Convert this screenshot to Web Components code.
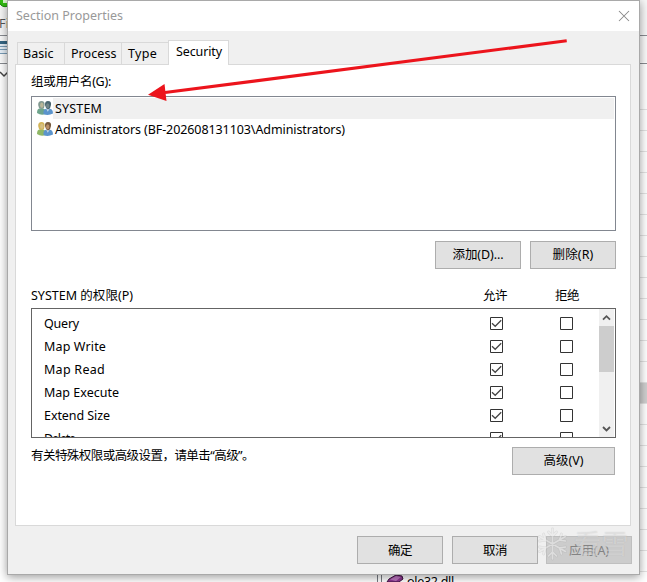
<!DOCTYPE html>
<html lang="zh-CN"><head><meta charset="utf-8"><title>Section Properties</title>
<style>html,body{margin:0;width:647px;height:582px;overflow:hidden;background:#fff}body{font:12.5px/16px "Noto Sans","Noto Sans CJK SC",sans-serif;color:#000}</style></head>
<body><desktop-scene></desktop-scene>
<script>
const define=(name,html,init)=>customElements.define(name,class extends HTMLElement{
  connectedCallback(){
    if(this.shadowRoot)return;
    const t=document.createElement('template');
    t.innerHTML=typeof html==='function'?html(this):html;
    this.attachShadow({mode:'open'}).append(t.content.cloneNode(true));
    if(init)init(this);
  }
});
// Text label whose letter spacing is adjusted to occupy a given width.
define('ui-label','<style>:host{display:block;white-space:pre;line-height:16px;flex:none}span{display:inline-block}</style><span><slot></slot></span>',el=>{
  const w=+el.getAttribute('w'),s=el.shadowRoot.querySelector('span');
  if(!w)return;
  s.style.letterSpacing=(w-s.getBoundingClientRect().width)/[...el.textContent].length+'px';
  el.style.width=w+'px';
});
define('ui-tab','<style>:host{display:flex;box-sizing:border-box;height:22px;border:1px solid #d9d9d9;border-bottom:0;border-left-width:0;padding:3px 0 0 6px;background:#f0f0f0;flex:none}:host([first]){border-left-width:1px;padding-left:5px}:host([active]){height:25px;border-left-width:1px;background:#fff;padding:3px 0 0 7px;margin:0 0 -1px -1px}</style><slot></slot>');
define('ui-button','<style>:host{display:flex;box-sizing:border-box;width:86px;height:28px;border:1px solid #adadad;background:#e1e1e1;align-items:center;justify-content:center;flex:none}:host([wide]){width:103px}:host([disabled]){background:#ccc;border-color:#bfbfbf;color:#838383}</style><slot></slot>');
define('user-icon',el=>{
  const a=el.hasAttribute('gold')?['#d3b458','#8fb765','#765a3e']:['#829991','#6da48c','#4a6670'];
  return `<style>:host{display:block;width:16px;height:16px;flex:none}svg{display:block}</style><svg width="16" height="16" viewBox="0 0 16 16">
  <path d="M0 13Q0 8.5 3 8.2h3Q9 9 9 14Q4 16 0 13Z" fill="${a[1]}"/>
  <path d="M1.2 5Q1 1 4.5 1Q8 1 7.6 5L7 8 4.5 9 2 8Z" fill="${a[0]}"/><ellipse cx="4.8" cy="5.2" rx="1.7" ry="2.6" fill="#d7c69c" opacity=".65"/>
  <path d="M6.5 14Q6 9 9 8.8h3.5Q16 9 16 13.5Q11 16 6.5 14Z" fill="#5b94cc"/>
  <path d="m9.2 8.7 1.6 3 1.7-3Z" fill="#c4d9e9"/><path d="M8 5Q7.7 1.2 11 1Q14.6 1.2 14 5L13 8.2 11 9.5 9 8Z" fill="${a[2]}"/>
  <ellipse cx="10.7" cy="5.8" rx="1.7" ry="2.5" fill="${el.hasAttribute('gold')?'#b98e67':'#718487'}"/></svg>`});
define('user-row','<style>:host{display:flex;height:21px;padding-left:4px}div{flex:1;padding:3px 0 0 2px;margin-right:1px;box-sizing:border-box}:host([selected]) div{background:#f0f0f0}</style><slot name="icon"></slot><div><slot></slot></div>');
define('user-list','<style>:host{display:block;box-sizing:border-box;height:135px;border:1px solid #828790;padding:1px 0 0 1px}</style><slot></slot>');
define('check-box',el=>`<style>:host{display:block;width:13px;height:13px;flex:none}svg{display:block}</style><svg width="13" height="13"><path d="M.5.5h12v12H.5Z" fill="#fff" stroke="#333"/>${el.hasAttribute('checked')?'<path d="m2 6.2 3.2 3.1 6-6.1" fill="none" stroke="#444" stroke-width="1.25"/>':''}</svg>`);
define('perm-row','<style>:host{display:grid;grid-template-columns:446px 70px 13px;height:23px;align-items:center;padding-left:12px}</style><slot></slot><check-box checked></check-box><check-box></check-box>');
define('scroll-bar','<style>:host{display:flex;flex-direction:column;width:15px;background:#f0f0f0;margin-right:1px;flex:none}.t{height:46px;background:#cdcdcd}.g{flex:1}svg{display:block}</style><svg width="15" height="17"><path d="m4 10.7 3.5-3.5 3.5 3.5" fill="none" stroke="#555" stroke-width="1.8"/></svg><div class="t"></div><div class="g"></div><svg width="15" height="17"><path d="m4 7 3.5 3.5L11 7" fill="none" stroke="#555" stroke-width="1.8"/></svg>');
define('perm-list','<style>:host{display:flex;box-sizing:border-box;height:130px;border:1px solid #646464;overflow:hidden}.r{flex:1;padding-top:3px;height:125px;overflow:hidden}</style><div class="r"><slot></slot></div><scroll-bar></scroll-bar>');
define('title-bar','<style>:host{display:flex;height:30px;background:#fff;color:#999;justify-content:space-between;padding:0 9px 0 8px;align-items:center}svg{display:block}</style><slot></slot><svg width="12" height="12"><path d="m1 1 10 10M11 1 1 11" stroke="#888" stroke-width="1.05"/></svg>');
define('app-backdrop',()=>{
  let lines='';for(let y=109;y<582;y+=21)lines+=`<path d="M640 ${y}.5h7" stroke="#e3e3e3"/>`;
  return `<style>:host{display:block;position:absolute;inset:0}svg{position:absolute;inset:0}.m{position:absolute;left:-1px;top:16px;color:#555;width:9px;overflow:hidden}.f{position:absolute;left:407px;top:574px;height:8px;overflow:hidden}</style>
  <svg width="647" height="582"><path d="M0 0h647v34H0Z" fill="#f7f7f7"/><path d="M0 34h647v28H0Z" fill="#fafafa"/>
  <path d="M0 35.5h647M0 63.5h647" stroke="#888b90"/>${lines}<path d="M640 383h7v20h-7Z" fill="#cfcfcf"/>
  <circle cx="5" cy="1" r="5.7" fill="#33bd13" stroke="#168907"/><path d="M3 0h4v3H3Z" fill="#d9f5cf"/>
  <path d="M0 41h8v13H0Z" fill="#e6eff7"/><path d="M0 42.5h8" stroke="#356684" stroke-width="3"/><path d="M0 46.5h8M0 49.5h8M0 53.5h8" stroke="#789bb5"/>
  <path d="m0 72 4 4 4-4" fill="none" stroke="#444" stroke-width="1.5"/>
  <path d="M377.5 574v8M381.5 574v8" stroke="#777b82"/>
  <path d="m387 582 2-3 7-4 6 1 1 3-4 3Z" fill="#8e3591" stroke="#3d143f"/><path d="m390 579.5 6-3.5 5 1-5 4Z" fill="#bd78c0"/></svg>
  <ui-label class="m" w="10">Fi</ui-label><div class="f"><ui-label w="47">ole32.dll</ui-label></div>`});
define('properties-dialog',`<style>
 :host{display:flex;flex-direction:column;box-sizing:border-box;position:absolute;left:7px;top:0;width:633px;height:575px;border:1px solid #a9a9a9;background:#f0f0f0;box-shadow:0 2px 9px #0006}
 .tabs{display:flex;align-items:flex-end;height:24px;margin:9px 0 0 9px;position:relative;z-index:1}
 .panel{display:flex;flex-direction:column;box-sizing:border-box;width:616px;height:462px;margin-left:7px;border:1px solid #d9d9d9;background:#fff;padding:9px 14px 0 15px}
 .actions{display:flex;justify-content:flex-end;gap:9px;margin-top:10px}
 .head{display:grid;grid-template-columns:452px 72px 25px;height:16px;margin:19px 0 4px}
 .foot{display:flex;justify-content:space-between;margin-top:9px;padding-right:1px}
 .bottom{display:flex;justify-content:flex-end;gap:9px;margin:10px 7px 0 0}.bottom ui-button:last-child{margin-left:-1px}
 </style>
 <title-bar><ui-label w="107">Section Properties</ui-label></title-bar>
 <div class="tabs"><ui-tab first style="width:48px"><ui-label w="30.5">Basic</ui-label></ui-tab><ui-tab style="width:57px"><ui-label w="45.5">Process</ui-label></ui-tab><ui-tab style="width:47px"><ui-label w="29">Type</ui-label></ui-tab><ui-tab active style="width:61px"><ui-label w="46">Security</ui-label></ui-tab></div>
 <div class="panel"><ui-label w="80">组或用户名(G):</ui-label>
 <user-list style="margin-top:6px"><user-row selected><user-icon slot="icon" style="margin-top:2px"></user-icon><ui-label w="47">SYSTEM</ui-label></user-row><user-row><user-icon slot="icon" gold style="margin-top:2px"></user-icon><ui-label w="290">Administrators (BF-202608131103\\Administrators)</ui-label></user-row></user-list>
 <div class="actions"><ui-button><ui-label w="51">添加(D)...</ui-label></ui-button><ui-button><ui-label w="41">删除(R)</ui-label></ui-button></div>
 <div class="head"><ui-label w="102">SYSTEM 的权限(P)</ui-label><ui-label w="24">允许</ui-label><ui-label w="24">拒绝</ui-label></div>
 <perm-list><perm-row><ui-label w="35">Query</ui-label></perm-row><perm-row><ui-label w="62">Map Write</ui-label></perm-row><perm-row><ui-label w="61">Map Read</ui-label></perm-row><perm-row><ui-label w="75">Map Execute</ui-label></perm-row><perm-row><ui-label w="66">Extend Size</ui-label></perm-row><perm-row><ui-label w="31">Delete</ui-label></perm-row></perm-list>
 <div class="foot"><ui-label w="223" style="padding-top:1px">有关特殊权限或高级设置，请单击“高级”。</ui-label><ui-button wide><ui-label w="40">高级(V)</ui-label></ui-button></div></div>
 <div class="bottom"><ui-button><ui-label w="24" style="padding-top:1px">确定</ui-label></ui-button><ui-button><ui-label w="24" style="padding-top:1px">取消</ui-label></ui-button><ui-button disabled><ui-label w="40" style="padding-top:1px">应用(A)</ui-label></ui-button></div>`);
define('scene-overlay',`<style>:host{display:block;position:absolute;inset:0}svg{position:absolute;inset:0}.w{position:absolute;left:574px;top:529px;font-size:27px;color:#ffffff5c;text-shadow:0 0 1px #8885}.w ui-label{line-height:30px}</style>
 <svg width="647" height="582"><path d="M566.7 40.8 165 92.6" stroke="#ec141c" stroke-width="3"/><path d="m148 94.7 16.5-10.8 2 17Z" fill="#ec141c"/>
 <g transform="translate(552.5 544)" fill="none" stroke-linecap="round"><path id="flake" stroke="#999" stroke-opacity=".22" stroke-width="2.8" d="M0-15V15M-13-7.5 13 7.5M-13 7.5 13-7.5M-4-12 0-8 4-12M-4 12 0 8 4 12M-13-3-7-4-9-10M13-3 7-4 9-10M-13 3-7 4-9 10M13 3 7 4 9 10"/><path stroke="#fff" stroke-opacity=".45" stroke-width="1.6" d="M0-15V15M-13-7.5 13 7.5M-13 7.5 13-7.5M-4-12 0-8 4-12M-4 12 0 8 4 12M-13-3-7-4-9-10M13-3 7-4 9-10M-13 3-7 4-9 10M13 3 7 4 9 10"/></g></svg>
 <div class="w"><ui-label w="55">看雪</ui-label></div>`);
define('desktop-scene','<style>:host{display:block;position:relative;width:647px;height:582px;overflow:hidden}</style><app-backdrop></app-backdrop><properties-dialog></properties-dialog><scene-overlay></scene-overlay>');
</script></body></html>
